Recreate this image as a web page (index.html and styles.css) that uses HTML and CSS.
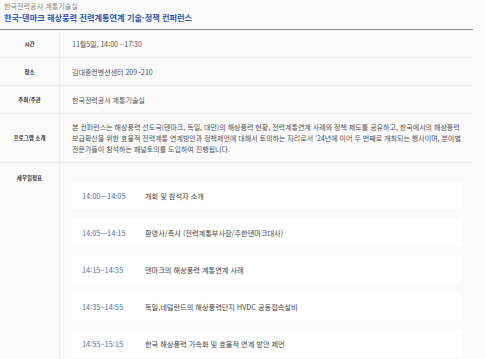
FILE: index.html
```html
<!DOCTYPE html>
<html lang="ko">
<head>
<meta charset="utf-8">
<link rel="stylesheet" href="styles.css">
</head>
<body>
<div class="page">
  <p class="org">한국전력공사 계통기술실</p>
  <h1 class="title">한국-덴마크 해상풍력 전력계통연계 기술·정책 컨퍼런스</h1>
  <div class="info">
    <div class="row">
      <div class="label">시간</div>
      <div class="value">11월5일, 14:00 - 17:30</div>
    </div>
    <div class="row">
      <div class="label">장소</div>
      <div class="value">김대중컨벤션센터 209~210</div>
    </div>
    <div class="row">
      <div class="label">주최/주관</div>
      <div class="value">한국전력공사 계통기술실</div>
    </div>
    <div class="row row-tall">
      <div class="label">프로그램 소개</div>
      <div class="value para">본 컨퍼런스는 해상풍력 선도국(덴마크, 독일, 대만)의 해상풍력 현황, 전력계통연계 사례와 정책 제도를 공유하고, 한국에서의 해상풍력 보급확산을 위한 효율적 전력계통 연계방안과 정책제언에 대해서 토의하는 자리로서 ‘24년에 이어 두 번째로 개최되는 행사이며, 분야별 전문가들이 참석하는 패널토의를 도입하여 진행됩니다.</div>
    </div>
    <div class="row row-schedule">
      <div class="label label-top">세부일정표</div>
      <div class="value schedule">
        <div class="card"><span class="time">14:00—14:05</span><span class="desc">개회 및 참석자 소개</span></div>
        <div class="card"><span class="time">14:05—14:15</span><span class="desc">환영사/축사 (전력계통부사장/주한덴마크대사)</span></div>
        <div class="card"><span class="time">14:15~14:35</span><span class="desc">덴마크의 해상풍력 계통연계 사례</span></div>
        <div class="card"><span class="time">14:35~14:55</span><span class="desc">독일,네덜란드의 해상풍력단지 HVDC 공동접속설비</span></div>
        <div class="card"><span class="time">14:55~15:15</span><span class="desc">한국 해상풍력 가속화 및 효율적 연계 방안 제언</span></div>
      </div>
    </div>
  </div>
</div>
</body>
</html>
```
FILE: styles.css
```css
* { box-sizing: border-box; margin: 0; padding: 0; }
html, body {
  background: #fafafa;
}
body {
  margin: 0;
  font-family: "Noto Sans CJK KR", "Noto Sans", sans-serif;
  color: #444;
  overflow: hidden;
}
.page {
  width: 473px;
}
.org {
  font-size: 7.1px;
  line-height: 10px;
  color: #888;
  padding: 1px 0 0 4px;
}
.title {
  font-size: 8.2px;
  line-height: 12px;
  font-weight: 700;
  color: #2e56b0;
  padding-left: 4px;
  margin-bottom: 6px;
}
.info {
  border-top: 1px solid #8c8c8c;
}
.row {
  display: grid;
  grid-template-columns: 60px 1fr;
  border-bottom: 1px solid #ededed;
  min-height: 28px;
}
.label {
  border-right: 1px solid #efefef;
  font-size: 5.5px;
  font-weight: 700;
  color: #333;
  display: flex;
  align-items: center;
  justify-content: center;
}
.label-top {
  align-items: flex-start;
  padding-top: 11px;
}
.value {
  display: flex;
  align-items: center;
  padding-left: 12px;
  font-size: 7px;
  color: #555;
}
.para {
  display: block;
  padding: 8px 12px 7px 12px;
  line-height: 11px;
  font-size: 7px;
}
.row-tall {
  min-height: 47px;
}
.row-schedule {
  border-bottom: none;
}
.schedule {
  display: flex;
  flex-direction: column;
  align-items: stretch;
  gap: 10px;
  padding: 19px 12px 20px 12px;
}
.card {
  background: #fff;
  height: 27px;
  display: flex;
  align-items: center;
  padding-left: 10px;
}
.time {
  width: 63px;
  flex: none;
  color: #5470b0;
  font-size: 7.4px;
}
.desc {
  color: #444;
  font-size: 7.2px;
}
```
